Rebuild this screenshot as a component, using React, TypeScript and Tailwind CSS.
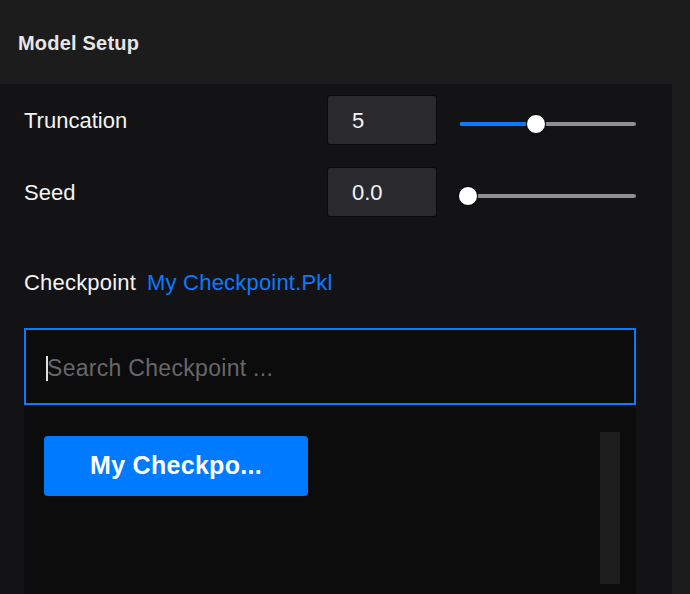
const font = { fontFamily: '"Liberation Sans", Arial, sans-serif' };

const Slider = ({ left, fill }: { left: number; fill: number }) => (
  <div className="relative w-[176px] h-[22px] ml-[23px] mt-[7px]">
    <div className="absolute left-0 right-0 top-[9px] h-[4px] rounded-full bg-[#8e8e93]" />
    <div
      className="absolute left-0 top-[9px] h-[4px] rounded-l-full bg-[#0a7aff]"
      style={{ width: fill }}
    />
    <div
      className="absolute top-[1px] w-[20px] h-[20px] rounded-full bg-white border border-black shadow"
      style={{ left }}
    />
  </div>
);

const Row = ({ label, value, left, fill }: { label: string; value: string; left: number; fill: number }) => (
  <div className="flex items-center h-[50px]">
    <div className="w-[303px] text-[22px] text-[#f4f4f4]">{label}</div>
    <div className="w-[110px] h-[50px] flex items-center pl-[24px] rounded-[3px] bg-[#2a2a2e] border border-[#0b0b0c] text-[22px] text-[#f4f4f4]">
      {value}
    </div>
    <Slider left={left} fill={fill} />
  </div>
);

export default function App() {
  return (
    <div className="w-[690px] h-[594px] overflow-hidden bg-[#1c1c1d] flex flex-col" style={font}>
      <div className="h-[84px] shrink-0 flex items-center px-[18px] pt-[2px]">
        <span className="text-[20px] font-bold text-[#e6e6e8] tracking-[0.2px]">Model Setup</span>
      </div>
      <div className="flex-1 flex min-h-0">
        <div className="w-[672px] bg-[#131315] px-6 pt-[11px] flex flex-col">
          <Row label="Truncation" value="5" left={66} fill={66} />
          <div className="h-[22px]" />
          <Row label="Seed" value="0.0" left={-2} fill={0} />
          <div className="mt-[52px] h-[26px] flex items-center text-[22px] tracking-[0.2px]">
            <span className="text-[#f4f4f4]">Checkpoint</span>
            <span className="ml-[11px] text-[#0a7aff]">My Checkpoint.Pkl</span>
          </div>
          <div className="mt-[33px] w-[612px] flex-1 flex flex-col bg-[#0c0c0c]">
            <div className="h-[77px] border-2 border-[#0a7aff] flex items-center pl-[20px] pt-[3px] shrink-0">
              <span className="w-[2px] h-[25px] bg-[#e0e0e0]" />
              <span className="text-[23px] text-[#67676a] -ml-[1px] tracking-[0.3px]">Search Checkpoint ...</span>
            </div>
            <div className="flex-1 flex">
              <div className="flex-1 pt-[31px] pl-[20px]">
                <div className="w-[264px] h-[60px] rounded-[4px] bg-[#007aff] flex items-center justify-center text-[25px] font-bold text-white tracking-[0.3px]">
                  My Checkpo...
                </div>
              </div>
              <div className="w-[20px] mt-[27px] mb-[10px] mr-[16px] bg-[#1e1e1e]" />
            </div>
          </div>
        </div>
      </div>
    </div>
  );
}
